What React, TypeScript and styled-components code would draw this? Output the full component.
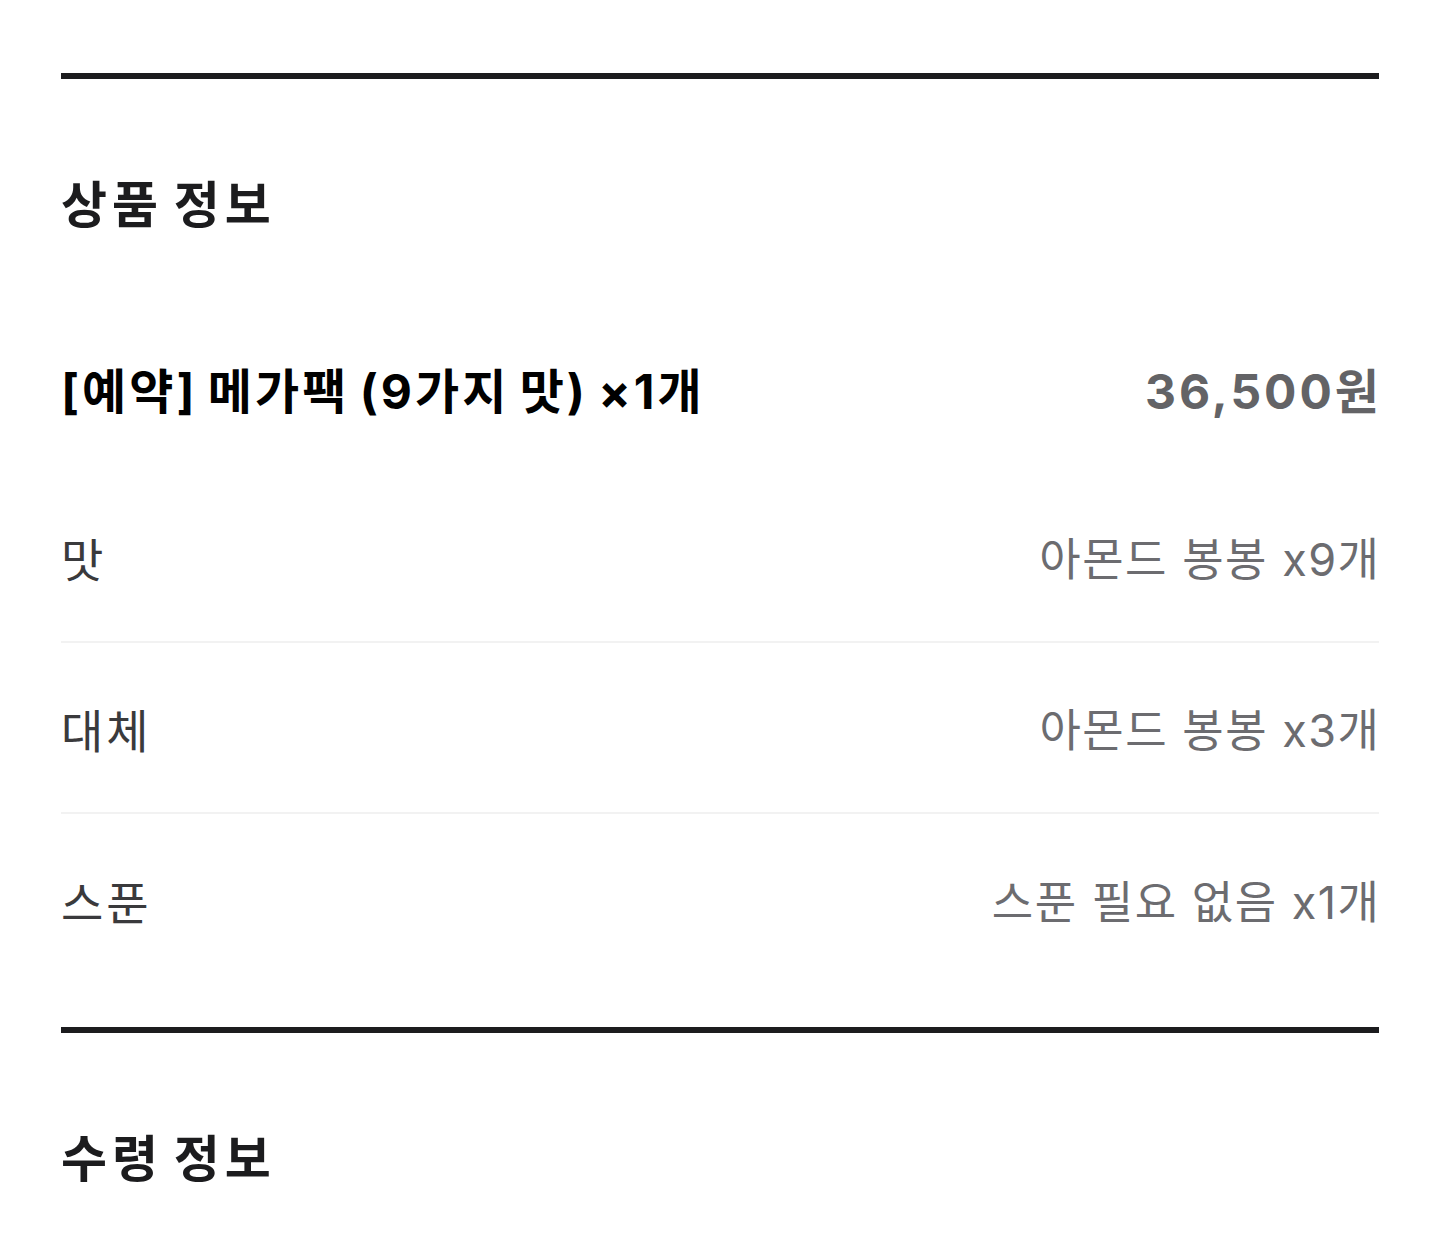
import React from 'react';
import styled, { createGlobalStyle } from 'styled-components';

const GlobalStyle = createGlobalStyle`
  html, body {
    margin: 0;
    padding: 0;
    background: #ffffff;
  }
  body {
    font-family: "Inter", "Noto Sans CJK KR", "Noto Sans", sans-serif;
    -webkit-font-smoothing: antialiased;
  }
`;

const Page = styled.div`
  width: 1439px;
  padding: 73px 60px 0 61px;
  box-sizing: border-box;
`;

const Section = styled.section`
  border-top: 6px solid #1c1c1e;
`;

const SectionTitle = styled.h2`
  margin: 0;
  padding: 93px 0 64px;
  font-size: 50px;
  line-height: 67px;
  font-weight: 700;
  color: #1c1c1e;
  letter-spacing: 5px;
  word-spacing: -6px;
`;

const ItemList = styled.div`
  display: flex;
  flex-direction: column;
  padding-bottom: 42px;
`;

const Row = styled.div<{ $divider?: boolean; $height?: number }>`
  display: flex;
  align-items: center;
  justify-content: space-between;
  box-sizing: border-box;
  height: ${(p) => p.$height ?? 171}px;
  border-bottom: ${(p) => (p.$divider ? '2px solid #f2f2f2' : 'none')};
`;

const ProductName = styled.span`
  font-size: 48px;
  font-weight: 700;
  color: #000000;
  letter-spacing: 3px;
  word-spacing: -4px;
`;

const Price = styled.span`
  font-size: 48px;
  font-weight: 700;
  color: #636366;
  letter-spacing: 3px;
  margin-right: -3px;
`;

const OptionLabel = styled.span`
  font-size: 46px;
  font-weight: 400;
  color: #3a3a3c;
  letter-spacing: 3px;
`;

const OptionValue = styled.span`
  font-size: 45px;
  font-weight: 400;
  color: #6c6c70;
  letter-spacing: 1.5px;
  margin-right: -1.5px;
`;

const options = [
  { label: '맛', value: '아몬드 봉봉 x9개' },
  { label: '대체', value: '아몬드 봉봉 x3개' },
  { label: '스푼', value: '스푼 필요 없음 x1개' },
];

export default function App() {
  return (
    <>
      <GlobalStyle />
      <Page>
        <Section>
          <SectionTitle>상품 정보</SectionTitle>
          <ItemList>
            <Row $height={169}>
              <ProductName>[예약] 메가팩 (9가지 맛) ×1개</ProductName>
              <Price>36,500원</Price>
            </Row>
            {options.map((o, i) => (
              <Row key={o.label} $divider={i < options.length - 1}>
                <OptionLabel>{o.label}</OptionLabel>
                <OptionValue>{o.value}</OptionValue>
              </Row>
            ))}
          </ItemList>
        </Section>
        <Section>
          <SectionTitle>수령 정보</SectionTitle>
        </Section>
      </Page>
    </>
  );
}
